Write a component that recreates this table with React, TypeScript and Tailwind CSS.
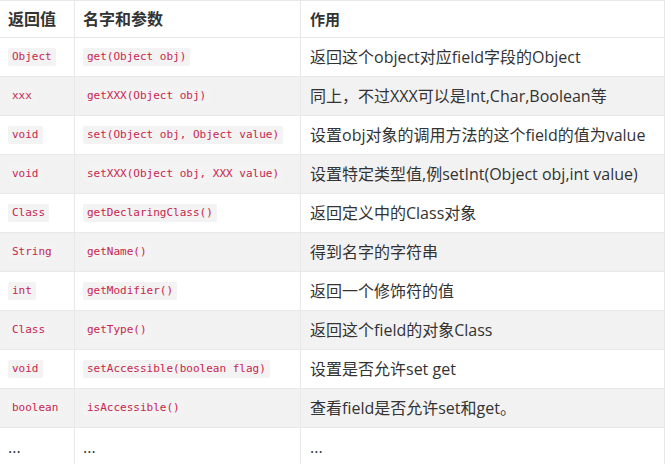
import React from "react";

const rows: [string, string, string][] = [
  ["Object", "get(Object obj)", "返回这个object对应field字段的Object"],
  ["xxx", "getXXX(Object obj)", "同上，不过XXX可以是Int,Char,Boolean等"],
  ["void", "set(Object obj, Object value)", "设置obj对象的调用方法的这个field的值为value"],
  ["void", "setXXX(Object obj, XXX value)", "设置特定类型值,例setInt(Object obj,int value)"],
  ["Class", "getDeclaringClass()", "返回定义中的Class对象"],
  ["String", "getName()", "得到名字的字符串"],
  ["int", "getModifier()", "返回一个修饰符的值"],
  ["Class", "getType()", "返回这个field的对象Class"],
  ["void", "setAccessible(boolean flag)", "设置是否允许set get"],
  ["boolean", "isAccessible()", "查看field是否允许set和get。"],
];

const sans = "font-['Open_Sans','Noto_Sans_CJK_SC',sans-serif]";

function Code({ children }: { children: React.ReactNode }) {
  return (
    <span className="inline-block h-[18px] px-[4px] rounded-[2px] bg-[#f3f3f3] text-[#c7254e] text-[11px] leading-[18px] font-['DejaVu_Sans_Mono','Liberation_Mono',monospace] whitespace-pre">
      {children}
    </span>
  );
}

export default function App() {
  return (
    <div className={`w-[665px] bg-white text-[#333] ${sans}`}>
      <div className="border-t border-r border-[#e8e8e8]">
        {/* header */}
        <div className="grid grid-cols-[75px_226px_1fr] h-[37px] border-b border-[#e8e8e8] font-bold">
          <div className="flex items-center pl-[8px] border-r border-[#e8e8e8] text-[16px]">返回值</div>
          <div className="flex items-center pl-[8px] border-r border-[#e8e8e8] text-[16px]">名字和参数</div>
          <div className="flex items-center pl-[9px] text-[15px]">作用</div>
        </div>
        {rows.map((r, i) => (
          <div
            key={i}
            className={`grid grid-cols-[75px_226px_1fr] h-[39px] border-b border-[#e8e8e8] ${
              i % 2 === 1 ? "bg-[#f2f2f2]" : "bg-white"
            }`}
          >
            <div className="flex items-center pl-[8px] border-r border-[#e8e8e8]">
              <Code>{r[0]}</Code>
            </div>
            <div className="flex items-center pl-[8px] border-r border-[#e8e8e8]">
              <Code>{r[1]}</Code>
            </div>
            <div className="flex items-center pl-[9px] text-[16px] whitespace-nowrap">{r[2]}</div>
          </div>
        ))}
        <div className="grid grid-cols-[75px_226px_1fr] h-[39px] border-b border-[#e8e8e8] bg-white text-[16px]">
          <div className="flex items-center pl-[8px] border-r border-[#e8e8e8]">...</div>
          <div className="flex items-center pl-[8px] border-r border-[#e8e8e8]">...</div>
          <div className="flex items-center pl-[9px]">...</div>
        </div>
      </div>
    </div>
  );
}
